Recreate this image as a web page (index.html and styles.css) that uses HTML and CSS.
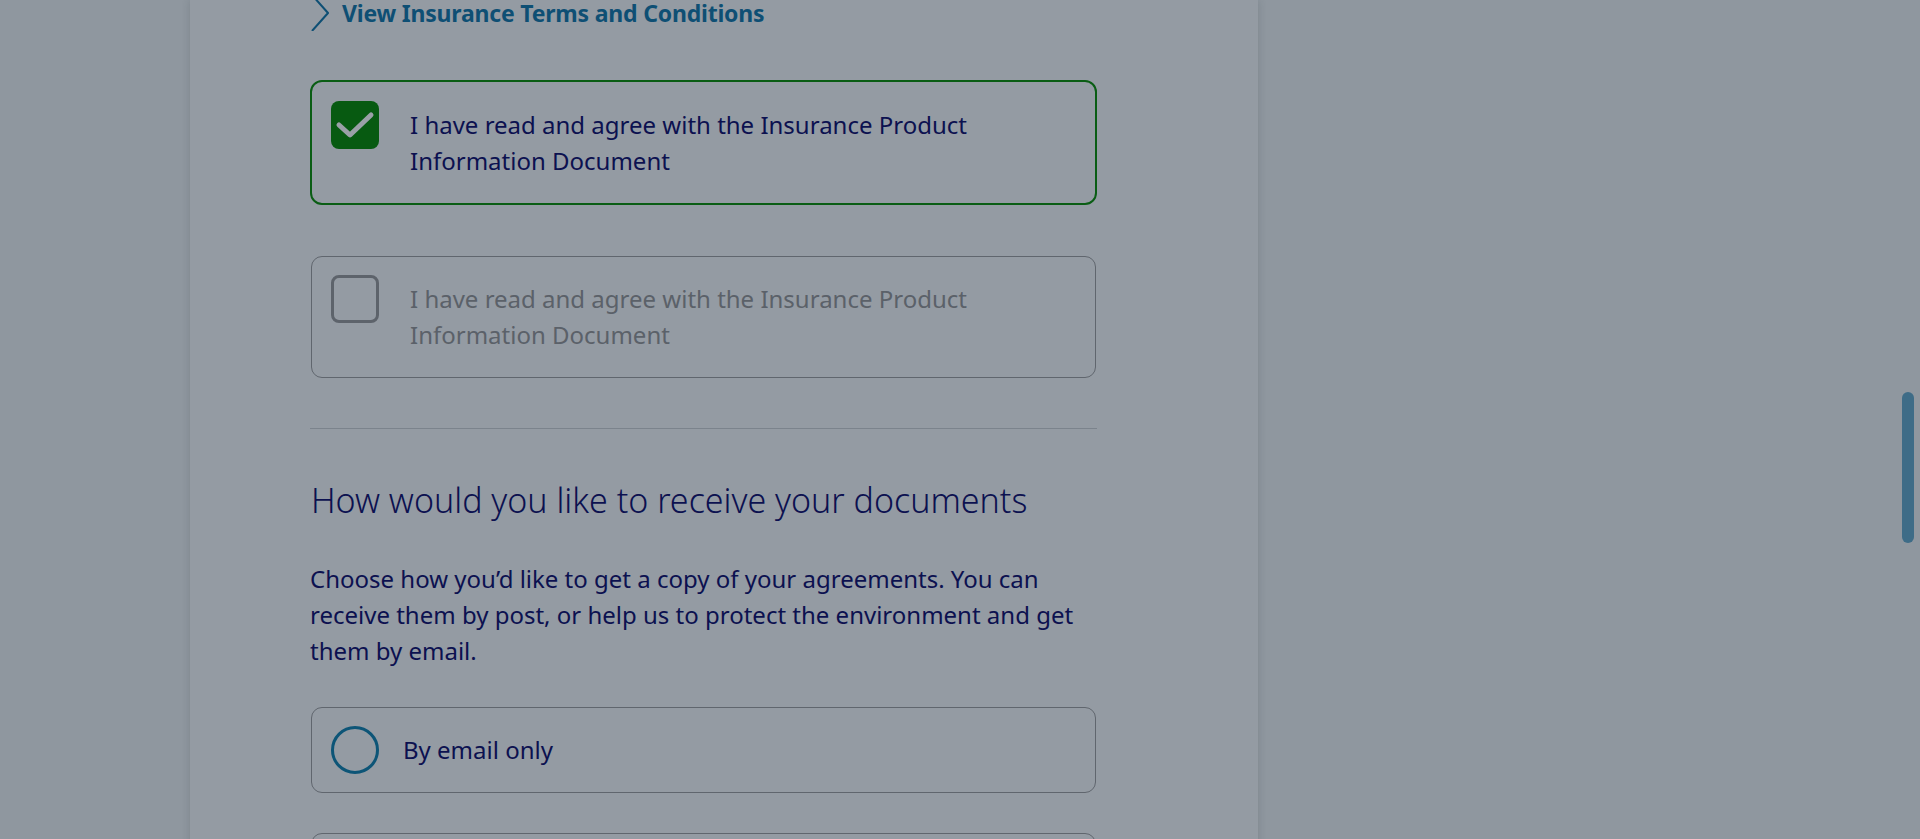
FILE: index.html
```html
<!DOCTYPE html>
<html lang="en">
<head>
<meta charset="utf-8">
<title>Insurance documents</title>
<link rel="stylesheet" href="styles.css">
</head>
<body>
<div class="page">
  <main class="panel">
    <div class="content">
      <a class="terms-link" href="#">
        <svg class="chevron" width="18" height="36" viewBox="0 0 18 36" aria-hidden="true"><polyline points="1,0 17,18 1,36" fill="none" stroke="currentColor" stroke-width="2"/></svg>
        <span>View Insurance Terms and Conditions</span>
      </a>

      <label class="choice choice--checked">
        <span class="box box--checked">
          <svg width="48" height="48" viewBox="0 0 48 48" aria-hidden="true"><polyline points="8,24 19,34 40,14" fill="none" stroke="#9aa0a7" stroke-width="5" stroke-linecap="round" stroke-linejoin="round"/></svg>
        </span>
        <span class="choice-text">I have read and agree with the Insurance Product Information Document</span>
      </label>

      <label class="choice choice--empty">
        <span class="box"></span>
        <span class="choice-text choice-text--muted">I have read and agree with the Insurance Product Information Document</span>
      </label>

      <hr class="divider">

      <h2 class="section-title">How would you like to receive your documents</h2>
      <p class="section-copy">Choose how you’d like to get a copy of your agreements. You can receive them by post, or help us to protect the environment and get them by email.</p>

      <label class="radio-card">
        <span class="radio"></span>
        <span class="radio-text">By email only</span>
      </label>

      <label class="radio-card">
        <span class="radio"></span>
        <span class="radio-text">By post</span>
      </label>
    </div>
  </main>
</div>
<div class="scroll-thumb"></div>
</body>
</html>
```
FILE: styles.css
```css
html, body {
  margin: 0;
  padding: 0;
}
body {
  background: #8f979f;
  height: 839px;
  overflow: hidden;
  font-family: "Noto Sans", "Open Sans", sans-serif;
  color: #0c1150;
}
.page {
  display: flex;
  padding-left: 190px;
}
.panel {
  width: 1068px;
  min-height: 1200px;
  box-sizing: border-box;
  background: #949ba3;
  box-shadow: 0 0 8px rgba(40, 48, 58, 0.18);
  padding: 0 161px 0 120px;
}
.content {
  margin-top: -5px;
  display: flex;
  flex-direction: column;
}
.terms-link {
  display: flex;
  align-items: center;
  gap: 13px;
  margin-left: 1px;
  color: #0e4f74;
  text-decoration: none;
  font-weight: 700;
  font-size: 23px;
  line-height: 36px;
  letter-spacing: -0.2px;
}
.chevron {
  flex: none;
  display: block;
}
.choice {
  display: flex;
  align-items: flex-start;
  margin: 0 1px;
  padding: 18px 20px 24px 19px;
  border: 1px solid #60666e;
  border-radius: 11px;
}
.choice--checked {
  margin: 49px 0 0;
  padding-top: 19px;
  border: 2px solid #0a5d14;
  border-radius: 12px;
}
.choice--empty {
  margin-top: 51px;
}
.box {
  flex: none;
  box-sizing: border-box;
  width: 48px;
  height: 48px;
  border: 3px solid #5d636b;
  border-radius: 8px;
}
.box--checked {
  border: none;
  background: #075a11;
}
.box svg {
  display: block;
}
.choice-text {
  margin: 6px 0 0 31px;
  font-size: 24px;
  line-height: 36px;
  color: #0c1150;
  max-width: 600px;
}
.choice-text--muted {
  color: #5b6169;
}
.divider {
  border: none;
  border-top: 1px solid #7b838c;
  margin: 50px 0 0;
  width: 100%;
}
.section-title {
  margin: 48px 0 0 1px;
  font-weight: 300;
  font-size: 34px;
  line-height: 46px;
  color: #0c1150;
}
.section-copy {
  margin: 38px 0 0;
  font-size: 24px;
  line-height: 36px;
  color: #0c1150;
}
.radio-card {
  display: flex;
  align-items: center;
  margin: 38px 1px 0;
  padding: 18px 18px 18px 19px;
  border: 1px solid #60666e;
  border-radius: 11px;
}
.radio-card + .radio-card {
  margin-top: 40px;
}
.radio {
  flex: none;
  box-sizing: border-box;
  width: 48px;
  height: 48px;
  border: 3px solid #0d5577;
  border-radius: 50%;
}
.radio-text {
  margin-left: 24px;
  font-size: 24px;
  line-height: 36px;
}
.scroll-thumb {
  position: fixed;
  left: 1902px;
  top: 392px;
  width: 12px;
  height: 151px;
  border-radius: 6px;
  background: #3e6c87;
}
```
